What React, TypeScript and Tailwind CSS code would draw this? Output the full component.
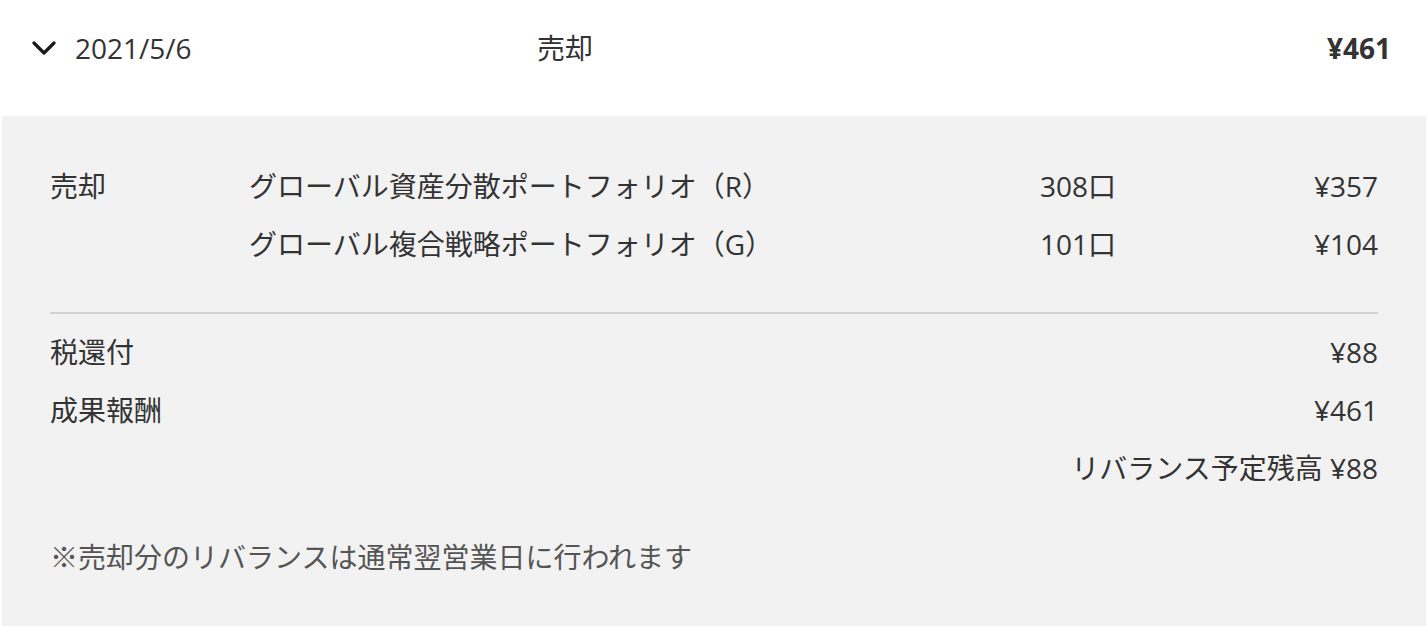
import React from 'react';

const rows = [
  { name: 'グローバル資産分散ポートフォリオ（R）', units: '308口', amount: '¥357' },
  { name: 'グローバル複合戦略ポートフォリオ（G）', units: '101口', amount: '¥104' },
];

export default function App() {
  return (
    <div
      className="bg-white min-h-screen text-[28px] text-[#333]"
      style={{ fontFamily: '"Open Sans", "Noto Sans CJK JP", sans-serif' }}
    >
      {/* header row */}
      <div className="flex items-start h-[116px] pt-[28px] pl-8 pr-[37px] leading-[40px]">
        <div className="flex items-center h-[40px] w-[43px]">
          <svg width="24" height="14" viewBox="0 0 24 14" fill="none">
            <path d="M2 2l10 10L22 2" stroke="#1a1a1a" strokeWidth="3.2" strokeLinecap="round" strokeLinejoin="round" />
          </svg>
        </div>
        <div className="w-[462px]">2021/5/6</div>
        <div className="flex-1">売却</div>
        <div className="font-bold">¥461</div>
      </div>

      {/* detail panel */}
      <div className="mx-[2px] bg-[#f2f2f2] px-12 pt-[41px] pb-[40px] leading-[58px]">
        {rows.map((r, i) => (
          <div key={i} className="flex">
            <div className="w-[199px]">{i === 0 ? '売却' : ''}</div>
            <div className="w-[791px]">{r.name}</div>
            <div className="flex-1">{r.units}</div>
            <div className="text-right">{r.amount}</div>
          </div>
        ))}

        <div className="mt-[39px] mb-[9px] h-[2px] bg-[#d2d2d2]" />

        <div className="flex justify-between">
          <div>税還付</div>
          <div>¥88</div>
        </div>
        <div className="flex justify-between">
          <div>成果報酬</div>
          <div>¥461</div>
        </div>
        <div className="text-right">リバランス予定残高 ¥88</div>

        <div className="mt-[31px] text-[#555]">※売却分のリバランスは通常翌営業日に行われます</div>
      </div>
    </div>
  );
}
